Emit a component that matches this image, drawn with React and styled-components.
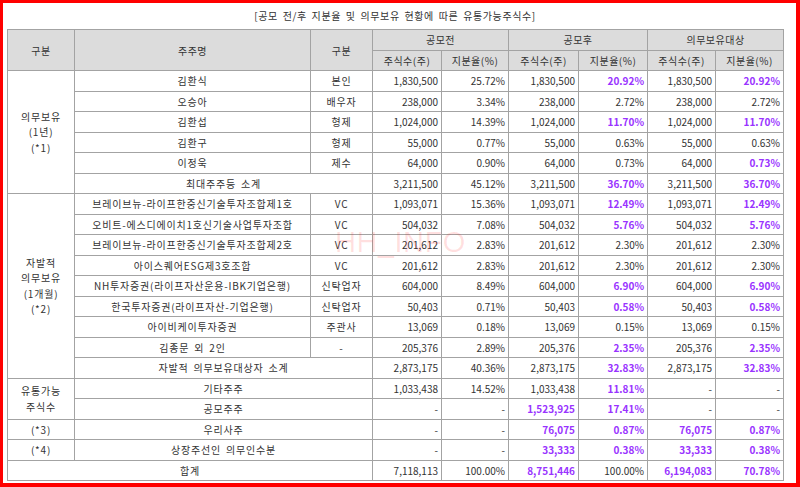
import React from 'react';
import styled, { createGlobalStyle } from 'styled-components';

const GlobalStyle = createGlobalStyle`
  body {
    margin: 0;
    background: #fff;
    font-family: 'Noto Sans CJK KR', 'Noto Sans', sans-serif;
  }
`;

const Frame = styled.div`
  width: 800px;
  height: 487px;
  box-sizing: border-box;
  border-style: solid;
  border-color: #ff0000;
  border-width: 3px 4px 4px 3px;
  padding-left: 4px;
  background: #fff;
  overflow: hidden;
`;

const Title = styled.div`
  width: 776px;
  height: 26px;
  padding-bottom: 2px;
  box-sizing: border-box;
  display: flex;
  align-items: center;
  justify-content: center;
  font-size: 10px;
  letter-spacing: 0.6px;
  word-spacing: 2px;
  color: #333;
`;

const TableWrap = styled.div`
  position: relative;
  width: 776px;
`;

const Watermark = styled.div`
  position: absolute;
  left: 328px;
  top: 197px;
  font-family: 'Liberation Sans', Arial, sans-serif;
  font-size: 29px;
  color: rgba(255, 0, 0, 0.12);
  pointer-events: none;
  letter-spacing: 0.5px;
`;

const Table = styled.table`
  width: 776px;
  table-layout: fixed;
  border-collapse: collapse;
  border: 1px solid #666;
  font-size: 10px;
  color: #333;
`;

const Row = styled.tr`
  height: 20.5px;
`;

const Th = styled.th`
  background: #dcdcdc;
  font-weight: normal;
  border: 1px solid #a3a3a3;
  padding: 0 3px;
  text-align: center;
  white-space: nowrap;
  letter-spacing: 0.5px;
`;

const Td = styled.td`
  border: 1px solid #a3a3a3;
  padding: 0 3px;
  text-align: ${(p) => (p.$num ? 'right' : 'center')};
  letter-spacing: ${(p) => (p.$num ? '0' : '0.8px')};
  word-spacing: 2px;
  white-space: nowrap;
  line-height: 13px;
  color: ${(p) => (p.$hl ? '#9933ff' : '#333')};
  font-weight: ${(p) => (p.$hl ? 'bold' : 'normal')};
`;

const Lines = styled.div`
  line-height: 15.5px;
`;

const widths = [67, 236, 62, 69, 67, 70, 69, 68, 68];

// '!' 로 시작하는 값은 보라색 굵은 글씨
const Num = ({ v }) => {
  const hl = v.startsWith('!');
  return <Td $num $hl={hl}>{hl ? v.slice(1) : v}</Td>;
};

const lockup = [
  ['김환식', '본인', '1,830,500', '25.72%', '1,830,500', '!20.92%', '1,830,500', '!20.92%'],
  ['오승아', '배우자', '238,000', '3.34%', '238,000', '2.72%', '238,000', '2.72%'],
  ['김환섭', '형제', '1,024,000', '14.39%', '1,024,000', '!11.70%', '1,024,000', '!11.70%'],
  ['김환구', '형제', '55,000', '0.77%', '55,000', '0.63%', '55,000', '0.63%'],
  ['이정욱', '제수', '64,000', '0.90%', '64,000', '0.73%', '64,000', '!0.73%'],
];

const voluntary = [
  ['브레이브뉴-라이프한중신기술투자조합제1호', 'VC', '1,093,071', '15.36%', '1,093,071', '!12.49%', '1,093,071', '!12.49%'],
  ['오비트-에스디에이치1호신기술사업투자조합', 'VC', '504,032', '7.08%', '504,032', '!5.76%', '504,032', '!5.76%'],
  ['브레이브뉴-라이프한중신기술투자조합제2호', 'VC', '201,612', '2.83%', '201,612', '2.30%', '201,612', '2.30%'],
  ['아이스퀘어ESG제3호조합', 'VC', '201,612', '2.83%', '201,612', '2.30%', '201,612', '2.30%'],
  ['NH투자증권(라이프자산운용-IBK기업은행)', '신탁업자', '604,000', '8.49%', '604,000', '!6.90%', '604,000', '!6.90%'],
  ['한국투자증권(라이프자산-기업은행)', '신탁업자', '50,403', '0.71%', '50,403', '!0.58%', '50,403', '!0.58%'],
  ['아이비케이투자증권', '주관사', '13,069', '0.18%', '13,069', '0.15%', '13,069', '0.15%'],
  ['김종문 외 2인', '-', '205,376', '2.89%', '205,376', '!2.35%', '205,376', '!2.35%'],
];

const Multi = ({ lines }) => (
  <Lines>
    {lines.map((l, i) => <div key={i}>{l}</div>)}
  </Lines>
);

const Nums = ({ values }) => values.map((v, i) => <Num key={i} v={v} />);

const App = () => (
  <>
    <GlobalStyle />
    <Frame>
      <Title>[공모 전/후 지분율 및 의무보유 현황에 따른 유통가능주식수]</Title>
      <TableWrap>
        <Table>
          <colgroup>
            {widths.map((w, i) => <col key={i} style={{ width: w }} />)}
          </colgroup>
          <thead>
            <Row>
              <Th rowSpan={2}>구분</Th>
              <Th rowSpan={2}>주주명</Th>
              <Th rowSpan={2}>구분</Th>
              <Th colSpan={2}>공모전</Th>
              <Th colSpan={2}>공모후</Th>
              <Th colSpan={2}>의무보유대상</Th>
            </Row>
            <Row>
              <Th>주식수(주)</Th>
              <Th>지분율(%)</Th>
              <Th>주식수(주)</Th>
              <Th>지분율(%)</Th>
              <Th>주식수(주)</Th>
              <Th>지분율(%)</Th>
            </Row>
          </thead>
          <tbody>
            {lockup.map(([name, kind, ...nums], i) => (
              <Row key={name}>
                {i === 0 && (
                  <Td rowSpan={6}>
                    <Multi lines={['의무보유', '(1년)', '(*1)']} />
                  </Td>
                )}
                <Td>{name}</Td>
                <Td>{kind}</Td>
                <Nums values={nums} />
              </Row>
            ))}
            <Row>
              <Td colSpan={2}>최대주주등 소계</Td>
              <Nums values={['3,211,500', '45.12%', '3,211,500', '!36.70%', '3,211,500', '!36.70%']} />
            </Row>
            {voluntary.map(([name, kind, ...nums], i) => (
              <Row key={name}>
                {i === 0 && (
                  <Td rowSpan={9}>
                    <Multi lines={['자발적', '의무보유', '(1개월)', '(*2)']} />
                  </Td>
                )}
                <Td>{name}</Td>
                <Td>{kind}</Td>
                <Nums values={nums} />
              </Row>
            ))}
            <Row>
              <Td colSpan={2}>자발적 의무보유대상자 소계</Td>
              <Nums values={['2,873,175', '40.36%', '2,873,175', '!32.83%', '2,873,175', '!32.83%']} />
            </Row>
            <Row>
              <Td rowSpan={2}>
                <Multi lines={['유통가능', '주식수']} />
              </Td>
              <Td colSpan={2}>기타주주</Td>
              <Nums values={['1,033,438', '14.52%', '1,033,438', '!11.81%', '-', '-']} />
            </Row>
            <Row>
              <Td colSpan={2}>공모주주</Td>
              <Nums values={['-', '-', '!1,523,925', '!17.41%', '-', '-']} />
            </Row>
            <Row>
              <Td>(*3)</Td>
              <Td colSpan={2}>우리사주</Td>
              <Nums values={['-', '-', '!76,075', '!0.87%', '!76,075', '!0.87%']} />
            </Row>
            <Row>
              <Td>(*4)</Td>
              <Td colSpan={2}>상장주선인 의무인수분</Td>
              <Nums values={['-', '-', '!33,333', '!0.38%', '!33,333', '!0.38%']} />
            </Row>
            <Row>
              <Td colSpan={3}>합계</Td>
              <Nums values={['7,118,113', '100.00%', '!8,751,446', '100.00%', '!6,194,083', '!70.78%']} />
            </Row>
          </tbody>
        </Table>
        <Watermark>HH_INFO</Watermark>
      </TableWrap>
    </Frame>
  </>
);

export default App;
